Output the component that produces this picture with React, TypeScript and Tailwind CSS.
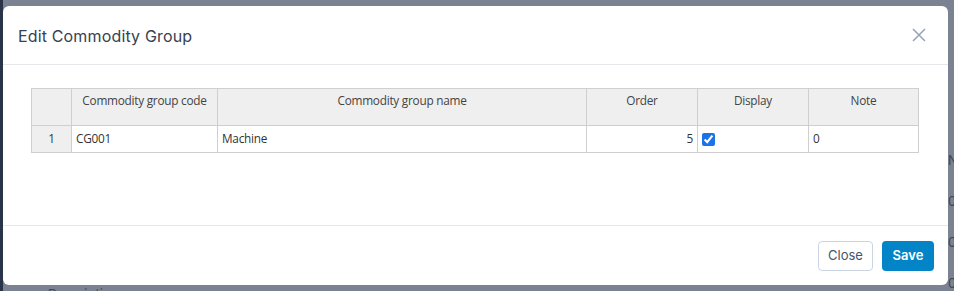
import React from 'react';

const cols = [
  { key: 'no', label: '', w: 'w-[40px]' },
  { key: 'code', label: 'Commodity group code', w: 'w-[146px]' },
  { key: 'name', label: 'Commodity group name', w: 'w-[369px]' },
  { key: 'order', label: 'Order', w: 'w-[111px]' },
  { key: 'display', label: 'Display', w: 'w-[111px]' },
  { key: 'note', label: 'Note', w: 'w-[110px]' },
];

const App: React.FC = () => {
  return (
    <div className="relative flex h-[291px] w-[954px] overflow-hidden bg-[#7b8291] font-['Inter',sans-serif]">
      <div className="h-full w-[3px] bg-[#293448]" />

      {/* page behind the overlay, only a few bits show */}
      <div className="absolute right-0 top-[153px] flex w-[6px] flex-col gap-[27px] text-[13px] leading-[14px] text-[#3f4654]">
        <span>N</span>
        <span>0</span>
        <span>0</span>
        <span>0</span>
      </div>
      <div className="absolute left-[48px] top-[287px] text-[13px] leading-[14px] text-[#3f4654]">Description</div>

      <div className="relative z-10 mt-[6px] flex h-[279px] w-[945px] flex-col rounded-[6px] bg-white">
        <div className="flex h-[59px] items-center justify-between border-b border-[#e5e7eb] pl-[15px] pr-[22px]">
          <h2 className="pt-[1px] text-[16px] font-normal tracking-[0.15px] text-[#374151]">Edit Commodity Group</h2>
          <svg width="14" height="14" viewBox="0 0 14 14" className="text-[#94a3b8]">
            <path d="M1 1 L13 13 M13 1 L1 13" stroke="currentColor" strokeWidth="1.5" />
          </svg>
        </div>

        <div className="flex-1 pl-[28px] pt-[23px]">
          <table className="table-fixed border-collapse font-['Open_Sans',sans-serif] text-[11.8px] tracking-[-0.25px] text-[#333]">
            <thead>
              <tr className="h-[37px] bg-[#efefef]">
                {cols.map((c) => (
                  <th
                    key={c.key}
                    className={`${c.w} border border-[#cfcfcf] px-[4px] pb-[14px] pt-[3px] text-center align-top font-normal text-[#444]`}
                  >
                    {c.label}
                  </th>
                ))}
              </tr>
            </thead>
            <tbody>
              <tr className="h-[27px]">
                <td className="border border-[#cfcfcf] bg-[#efefef] px-[4px] text-center">1</td>
                <td className="border border-[#cfcfcf] px-[4px]">CG001</td>
                <td className="border border-[#cfcfcf] px-[4px]">Machine</td>
                <td className="border border-[#cfcfcf] px-[4px] text-right">5</td>
                <td className="border border-[#cfcfcf] px-[4px]">
                  <input type="checkbox" checked readOnly className="mt-[3px] h-[13px] w-[13px] align-top accent-[#1a73e8]" />
                </td>
                <td className="border border-[#cfcfcf] px-[4px]">0</td>
              </tr>
            </tbody>
          </table>
        </div>

        <div className="flex h-[60px] items-center justify-end gap-[9px] border-t border-[#e5e7eb] pr-[14px] pt-[1px]">
          <button className="h-[30px] w-[55px] rounded-[4px] border border-[#cbd5e1] bg-white text-[13px] text-[#475569]">
            Close
          </button>
          <button className="h-[30px] w-[52px] rounded-[4px] bg-[#0284c7] text-[13px] font-semibold text-white">
            Save
          </button>
        </div>
      </div>
    </div>
  );
};

export default App;
